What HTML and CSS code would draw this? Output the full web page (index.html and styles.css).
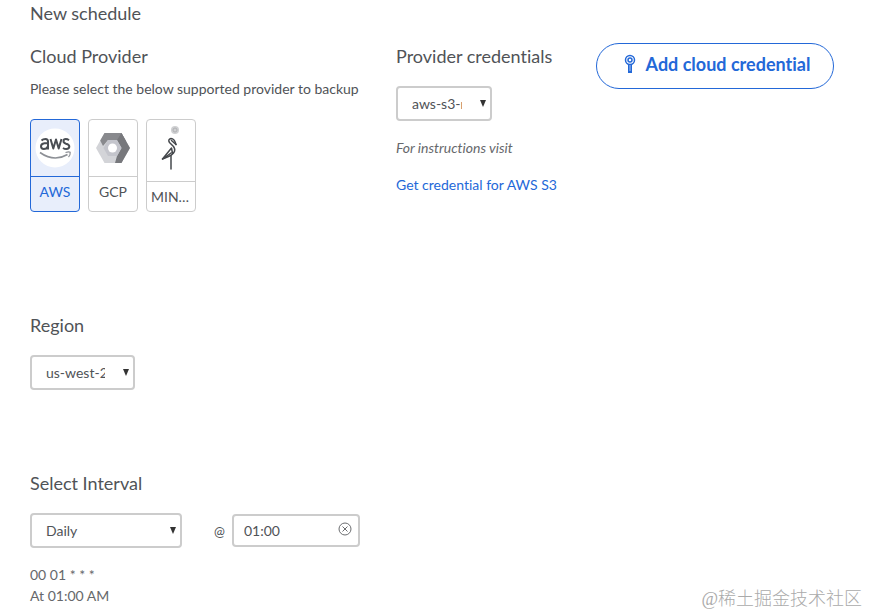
FILE: index.html
```html
<!DOCTYPE html>
<html lang="en">
<head>
	<meta charset="utf-8">
	<meta name="viewport" content="width=device-width, initial-scale=1.0">
	<title>New schedule</title>
	<link rel="stylesheet" href="styles.css">
</head>
<body>
	<form class="schedule">
		<h1 class="heading">New schedule</h1>

		<div class="top-row">
			<section class="provider">
				<h2 class="heading">Cloud Provider</h2>
				<p class="hint">Please select the below supported provider to backup</p>
				<div class="cards">
					<label class="card">
						<input type="radio" name="provider" value="aws" checked>
						<span class="card-logo">
							<svg width="40" height="40" viewBox="0 0 40 40" aria-hidden="true">
								<circle cx="20" cy="20" r="19.500" fill="#fff"/>
								<g fill="none" stroke="#4a4e54" stroke-width="2" stroke-linejoin="round">
									<path d="M6.500 12.500Q8 11 10.500 11Q13 11 13 13.500V21.500M13 15.200H9.500Q6 15.500 6 18.300Q6 21 8.800 21Q12 21 13 18"/>
									<path d="M15.500 11L18.300 20.500L21 11.500L23.700 20.500L26.500 11"/>
									<path d="M34 12.200Q32.500 11 30.800 11Q28.500 11 28.500 13.300Q28.500 15 31 15.800Q34.300 16.500 34.300 18.600Q34.300 21 31.300 21Q29.500 21 28 20"/>
								</g>
								<path d="M5 24.500Q19 34.500 32.500 26.500" fill="none" stroke="#8d9096" stroke-width="1.600"/>
								<path d="M30.500 24.500Q34 23.300 35.200 24.300Q35.500 27 33.500 29" fill="none" stroke="#8d9096" stroke-width="1.200"/>
							</svg>
						</span>
						<span class="card-name">AWS</span>
					</label>
					<label class="card">
						<input type="radio" name="provider" value="gcp">
						<span class="card-logo">
							<svg width="36" height="32" viewBox="0 0 36 32" aria-hidden="true">
								<path d="M1 16L9.500 1H26.500L35 16L26.500 31H9.500Z" fill="#d3d4d8"/>
								<path d="M5.200 8.600L9.500 1H26.500L31 9L24 11L22 8H13L8 14Z" fill="#88898d"/>
								<path d="M26.500 1L35 16L26.500 31H20L22 24L26.500 16L22 8Z" fill="#77787c"/>
								<path d="M13 8H22L26.500 16L22 24H13L8.500 16Z" fill="#c4c5cc"/>
								<circle cx="17.500" cy="16" r="4.500" fill="#fff"/>
							</svg>
						</span>
						<span class="card-name">GCP</span>
					</label>
					<label class="card">
						<input type="radio" name="provider" value="minio">
						<span class="card-logo card-logo-tall">
							<svg width="36" height="56" viewBox="0 0 36 56" aria-hidden="true">
								<circle cx="22" cy="7" r="4" fill="#cfd0d2"/>
								<circle cx="22" cy="7" r="2" fill="none" stroke="#b0b1b4"/>
								<g fill="none" stroke="#45484c" stroke-width="1.500" stroke-linejoin="round" stroke-linecap="round">
									<path d="M23 21.500Q21.500 15.500 18 15.500Q14.500 16.500 16.500 19.500L20.500 23.500Q23 27 20.500 30Q18.500 32.500 15.500 33.500L9.500 36"/>
									<path d="M18.500 17.500L23 21.500M9.500 36L18.500 25L19.500 30.500M12 34.500L18 30"/>
									<path d="M18 33V46"/>
								</g>
							</svg>
						</span>
						<span class="card-name">MINIO</span>
					</label>
				</div>
			</section>

			<section class="credentials">
				<h2 class="heading"><label for="credential">Provider credentials</label></h2>
				<select class="select select-credential" id="credential">
					<option>aws-s3-minio</option>
				</select>
				<p class="visit">For instructions visit</p>
				<a class="link" href="#">Get credential for AWS S3</a>
			</section>

			<button class="add-button" type="button">
				<svg width="12" height="20" viewBox="0 0 12 20" fill="none" stroke="#2368d8" aria-hidden="true">
					<circle cx="6" cy="6" r="4.500" stroke-width="1.500"/>
					<circle cx="6" cy="6" r="2" stroke-width="1.500"/>
					<path d="M6 10V19" stroke-width="4"/>
					<path d="M6 11V17" stroke="#a9c4ef"/>
				</svg>
				Add cloud credential
			</button>
		</div>

		<section class="region">
			<h2 class="heading"><label for="region">Region</label></h2>
			<select class="select select-region" id="region">
				<option>us-west-2</option>
			</select>
		</section>

		<section class="interval">
			<h2 class="heading"><label for="interval">Select Interval</label></h2>
			<div class="interval-row">
				<select class="select select-interval" id="interval">
					<option>Daily</option>
					<option>Weekly</option>
					<option>Monthly</option>
				</select>
				<label class="at" for="time">@</label>
				<div class="time">
					<input class="time-input" id="time" type="text" value="01:00">
					<button class="clear" type="button" aria-label="Clear time">
						<svg width="14" height="14" viewBox="0 0 14 14" fill="none" stroke="#6b6d70" aria-hidden="true">
							<circle cx="7" cy="7" r="6"/>
							<path d="M4.500 4.500L9.500 9.500M9.500 4.500L4.500 9.500"/>
						</svg>
					</button>
				</div>
			</div>
			<p class="cron">00 01 * * *<br>At 01:00 AM</p>
		</section>
	</form>
	<div class="watermark">@稀土掘金技术社区</div>
</body>
</html>
```

FILE: styles.css
```css
* {
	box-sizing: border-box;
}
body {
	margin: 0;
	background-color: #fff;
	color: #505357;
	font-family: Lato, sans-serif;
	font-size: 14px;
	font-variant-ligatures: none;
	line-height: 20px;
}
p {
	margin: 0;
}
.schedule {
	padding: 1px 35px 8px 30px;
}
.heading {
	margin: 0;
	font-size: 18px;
	font-weight: 400;
	line-height: 24px;
}
.top-row {
	display: grid;
	grid-template-columns: 366fr 200fr 238fr;
	align-items: start;
	margin-top: 18px;
}
.provider,
.credentials {
	padding-top: 1px;
}
.hint {
	margin-top: 11px;
}

/* provider cards */
.cards {
	display: flex;
	gap: 8px;
	margin-top: 20px;
}
.card {
	display: flex;
	flex-direction: column;
	position: relative;
	width: 50px;
	height: 93px;
	border: 1px solid #ccc;
	border-radius: 4px;
	overflow: hidden;
	cursor: pointer;
}
.card input {
	position: absolute;
	opacity: 0;
}
.card-logo {
	display: flex;
	flex-shrink: 0;
	align-items: center;
	justify-content: center;
	height: 57px;
	border-bottom: 1px solid #ccc;
}
.card-logo-tall {
	height: 62px;
}
.card-name {
	padding: 5px 4px;
	text-align: center;
	white-space: nowrap;
	overflow: hidden;
	text-overflow: ellipsis;
}
.card:has(input:checked) {
	border-color: #2368d8;
	background-color: #e8eefb;
	color: #2368d8;
}
.card:has(input:checked) .card-logo {
	border-color: #2368d8;
}

/* form controls */
.select {
	display: block;
	appearance: none;
	height: 35px;
	padding: 0 28px 0 14px;
	border: 2px solid #ccc;
	border-radius: 4px;
	background: #fff url("data:image/svg+xml,%3Csvg xmlns='http://www.w3.org/2000/svg' width='6' height='7'%3E%3Cpath d='M0 0H6L3 7Z' fill='%23333'/%3E%3C/svg%3E") no-repeat right 4px top 12px;
	color: #505357;
	font-family: inherit;
	font-size: 14px;
}
.select-credential {
	width: 96px;
	margin-top: 18px;
}
.select-region {
	width: 105px;
	margin-top: 18px;
}
.select-interval {
	width: 152px;
}
.visit {
	margin-top: 17px;
	color: #66686b;
	font-style: italic;
}
.link {
	display: block;
	margin-top: 17px;
	color: #2368d8;
	text-decoration: none;
}
.add-button {
	display: flex;
	align-items: center;
	justify-content: center;
	gap: 10px;
	height: 46px;
	padding: 0 0 4px 4px;
	border: 1px solid #2368d8;
	border-radius: 23px;
	background-color: #fff;
	color: #2368d8;
	font-family: inherit;
	font-size: 18px;
	font-variant-ligatures: none;
	font-weight: 700;
	white-space: nowrap;
}
.region {
	margin-top: 101px;
}
.interval {
	margin-top: 81px;
}
.interval-row {
	display: flex;
	align-items: center;
	margin-top: 18px;
}
.at {
	width: 50px;
	padding-left: 32px;
	font-size: 13px;
}
.time {
	display: flex;
	align-items: center;
	width: 128px;
	height: 33px;
	border: 2px solid #ccc;
	border-radius: 4px;
}
.time-input {
	flex: 1;
	min-width: 0;
	padding: 0 10px;
	border: 0;
	background: none;
	color: #505357;
	font-family: inherit;
	font-size: 14px;
}
.clear {
	display: flex;
	padding: 0 6px 4px;
	border: 0;
	background: none;
}
.cron {
	margin-top: 16px;
	color: #66686b;
	line-height: 21px;
}
.watermark {
	position: absolute;
	right: 7px;
	bottom: 4px;
	color: #aaa;
	font-family: "Liberation Serif", "Noto Sans CJK SC", sans-serif;
	font-size: 18px;
	font-weight: 300;
	line-height: 24px;
}
```
